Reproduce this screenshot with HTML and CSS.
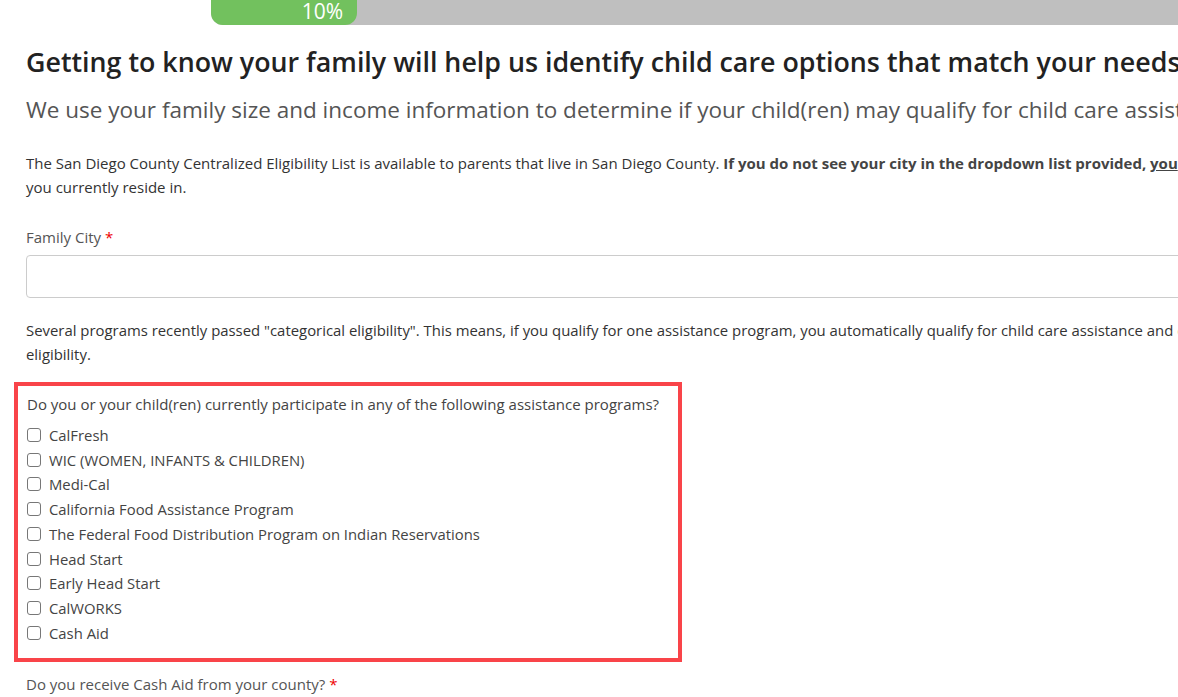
FILE: index.html
```html
<!DOCTYPE html>
<html>
<head>
<meta charset="utf-8">
<link rel="stylesheet" href="styles.css">
</head>
<body>
<div class="page">
  <div class="progress"><div class="progress-bar">10%</div></div>
  <div class="content">
    <h1 class="title">Getting to know your family will help us identify child care options that match your needs</h1>
    <h2 class="subtitle">We use your family size and income information to determine if your child(ren) may qualify for child care assistance.</h2>
    <p class="text">The San Diego County Centralized Eligibility List is available to parents that live in San Diego County. <b>If you do not see your city in the dropdown list provided, <u>you</u> must contact the Centralized Eligibility List in the county</b><br>you currently reside in.</p>
    <div class="field">
      <label class="label">Family City <span class="req">*</span></label>
      <div class="input"></div>
    </div>
    <p class="text text-gap">Several programs recently passed "categorical eligibility". This means, if you qualify for one assistance program, you automatically qualify for child care assistance and do not need to provide income<br>eligibility.</p>
    <div class="highlight">
      <div class="question">Do you or your child(ren) currently participate in any of the following assistance programs?</div>
      <ul class="checks">
        <li><span class="box"></span>CalFresh</li>
        <li><span class="box"></span>WIC (WOMEN, INFANTS &amp; CHILDREN)</li>
        <li><span class="box"></span>Medi-Cal</li>
        <li><span class="box"></span>California Food Assistance Program</li>
        <li><span class="box"></span>The Federal Food Distribution Program on Indian Reservations</li>
        <li><span class="box"></span>Head Start</li>
        <li><span class="box"></span>Early Head Start</li>
        <li><span class="box"></span>CalWORKS</li>
        <li><span class="box"></span>Cash Aid</li>
      </ul>
    </div>
    <div class="label last">Do you receive Cash Aid from your county? <span class="req">*</span></div>
  </div>
</div>
</body>
</html>
```
FILE: styles.css
```css
html, body { margin: 0; padding: 0; background: #fff; }
body { overflow: hidden; width: 1178px; height: 697px; font-family: "Open Sans", "Noto Sans", sans-serif; color: #333; }
.page { width: 1400px; }
.progress { margin-left: 211px; height: 25px; background: #bfbfbf; border-bottom-left-radius: 12px; }
.progress-bar { width: 146px; height: 25px; background: #72c15e; border-radius: 0 0 12px 12px; color: #fff; font-size: 21px; line-height: 23px; text-align: right; padding-right: 14px; box-sizing: border-box; }
.content { padding-left: 26px; }
.title { margin: 20px 0 0; font-size: 26.8px; font-weight: 600; color: #222; line-height: 34px; white-space: nowrap; }
.subtitle { margin: 15px 0 0; font-size: 22.5px; font-weight: 400; color: #555; line-height: 32px; white-space: nowrap; }
.text { margin: 25px 0 0; font-size: 15px; line-height: 24px; white-space: nowrap; color: #333; }
.text-gap { margin-top: 20px; font-size: 14.9px; }
.text b { font-weight: 700; color: #444; }
.field { margin-top: 26px; }
.label { display: block; font-size: 15px; line-height: 24px; color: #555; }
.req { color: #e00; }
.input { margin-top: 6px; width: 1200px; height: 41px; border: 1px solid #ccc; border-radius: 4px; }
.highlight { margin: 16px 0 0 -12px; width: 651px; border: 4px solid #f94449; padding: 6px 0 13px 9px; }
.question { font-size: 15px; line-height: 24px; color: #444; }
.checks { list-style: none; margin: 6.6px 0 0; padding: 0; }
.checks li { display: flex; align-items: center; height: 24.75px; font-size: 14.85px; color: #444; }
.box { width: 12px; height: 12px; border: 1px solid #777; border-radius: 3px; margin: 0 8px 0 0; flex: none; }
.last { margin-top: 10px; }
```
